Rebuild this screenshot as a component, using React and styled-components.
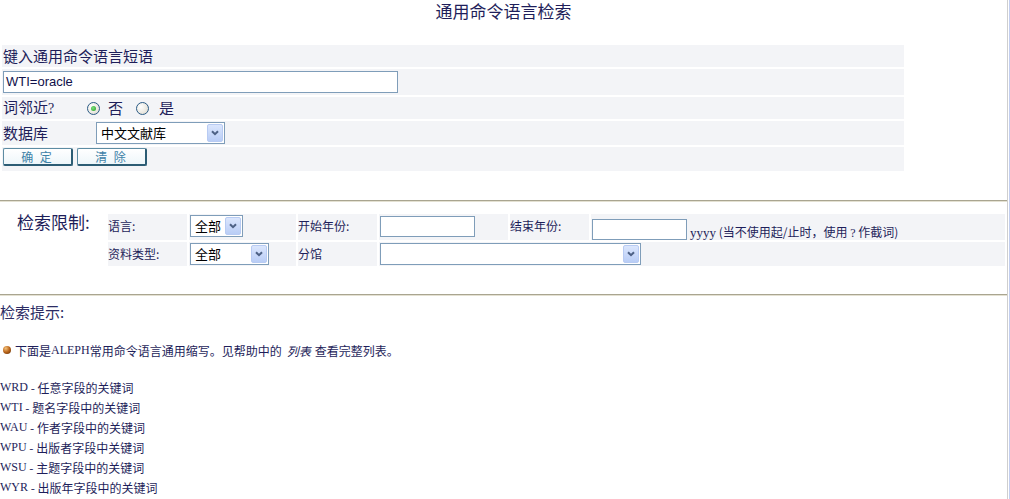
import React from 'react';
import styled, { createGlobalStyle } from 'styled-components';

const NAVY = '#1e1e5a';

const GlobalStyle = createGlobalStyle`
  html, body {
    margin: 0;
    padding: 0;
    background: #fff;
  }
  body {
    font-family: "Noto Sans CJK SC", "Liberation Sans", sans-serif;
    color: ${NAVY};
  }
`;

const Page = styled.div`
  display: flex;
  min-height: 499px;
`;

const Main = styled.div`
  width: 1007px;
  flex: none;
`;

const Edge = styled.div`
  width: 1px;
  flex: none;
  border-left: 1px solid #cfcfcf;
  border-right: 1px solid #c3cff0;
`;

const Title = styled.div`
  text-align: center;
  font-size: 17px;
  line-height: 22px;
  height: 23px;
`;

const FormTable = styled.div`
  width: 906px;
  box-sizing: border-box;
  margin-top: 20px;
  padding: 2px;
  display: flex;
  flex-direction: column;
  gap: 2px;
`;

const Row = styled.div`
  height: ${p => p.$h}px;
  background: #f3f4f7;
  display: flex;
  align-items: ${p => (p.$top ? 'flex-start' : 'center')};
  padding-left: 1px;
  padding-top: ${p => (p.$top ? 1 : 0)}px;
  box-sizing: border-box;
  font-size: 15px;
  line-height: 20px;
`;

const Label = styled.span`
  width: ${p => p.$w}px;
  flex: none;
`;

const Serif = styled.span`
  font-family: "Liberation Serif", serif;
  font-size: ${p => p.$size || 13}px;
  color: ${p => p.$c || NAVY};
`;

const TextInput = styled.div`
  width: ${p => p.$w}px;
  height: ${p => p.$h || 22}px;
  box-sizing: border-box;
  border: 1px solid #7f9db9;
  background: #fff;
  font-family: "Liberation Sans", sans-serif;
  font-size: 13px;
  color: #10104a;
  padding-left: 2px;
  display: flex;
  align-items: center;
  flex: none;
`;

const RadioDot = styled.span`
  width: 13px;
  height: 13px;
  box-sizing: border-box;
  border-radius: 50%;
  border: 1px solid #2a5a85;
  background: radial-gradient(circle at 35% 35%, #ffffff 0%, #eceae3 55%, #d6d3c6 100%);
  display: inline-flex;
  align-items: center;
  justify-content: center;
  margin-left: ${p => p.$ml}px;
  flex: none;
  &::after {
    content: '';
    width: 5px;
    height: 5px;
    border-radius: 50%;
    background: ${p => (p.$on ? 'radial-gradient(circle at 40% 40%, #7ee07e, #1f9a1f)' : 'transparent')};
  }
`;

const RadioText = styled.span`
  margin-left: ${p => p.$ml}px;
`;

const SelectBox = styled.div`
  width: ${p => p.$w}px;
  height: 22px;
  box-sizing: border-box;
  border: 1px solid #7f9db9;
  background: #fff;
  display: flex;
  align-items: center;
  padding: 0 1px 0 4px;
  font-size: 13px;
  color: #000;
  flex: none;
`;

const SelectText = styled.span`
  flex: 1;
  line-height: 18px;
`;

const ArrowBtn = styled.span`
  width: 16px;
  height: 18px;
  box-sizing: border-box;
  border: 1px solid #b8cbf3;
  border-radius: 2px;
  background: linear-gradient(#dbe6fd, #b9cdf6);
  display: flex;
  align-items: center;
  justify-content: center;
`;

const Chevron = () => (
  <svg width="8" height="6" viewBox="0 0 8 6">
    <path d="M1 1.2 L4 4.2 L7 1.2" fill="none" stroke="#4d6185" strokeWidth="2" />
  </svg>
);

const Select = ({ w, children }) => (
  <SelectBox $w={w}>
    <SelectText>{children}</SelectText>
    <ArrowBtn>
      <Chevron />
    </ArrowBtn>
  </SelectBox>
);

const ButtonBar = styled.div`
  display: flex;
  gap: 4px;
`;

const Btn = styled.button`
  width: 70px;
  height: 18px;
  padding: 0;
  box-sizing: border-box;
  border-top: 1px solid #5d8ca3;
  border-left: 1px solid #5d8ca3;
  border-right: 2px solid #2c5c74;
  border-bottom: 2px solid #2c5c74;
  border-radius: 2px;
  background: linear-gradient(#ffffff, #eef6fa);
  color: #3f82a8;
  font-family: "Noto Sans CJK SC", sans-serif;
  font-size: 12px;
  line-height: 14px;
  letter-spacing: 2px;
`;

const Rule = styled.div`
  width: 1007px;
  margin-top: ${p => p.$mt}px;
  border-top: 1px solid #a9a590;
  border-bottom: 1px solid #e4e1d2;
`;

const LimitSection = styled.div`
  display: flex;
  margin-top: 10px;
`;

const LimitTitle = styled.div`
  width: 106px;
  flex: none;
  box-sizing: border-box;
  padding-left: 17px;
  font-size: 17px;
  line-height: 22px;
  margin-top: -1px;
`;

const LimitGrid = styled.div`
  width: 901px;
  box-sizing: border-box;
  padding: 2px;
  display: grid;
  grid-template-columns: 79px 107px 79px 129px 79px 1fr;
  grid-template-rows: 26px 24px;
  gap: 2px;
`;

const Cell = styled.div`
  background: #f3f4f7;
  grid-column: ${p => p.$span || 'auto'};
  font-size: 12px;
  line-height: 16px;
  padding-top: ${p => (p.$pt === undefined ? 1 : p.$pt)}px;
  padding-left: ${p => p.$pl || 0}px;
  display: ${p => (p.$flex ? 'flex' : 'block')};
  align-items: flex-end;
`;

const Note = styled.span`
  font-size: 12px;
  line-height: 14px;
  margin-left: 3px;
  white-space: nowrap;
`;

const HintTitle = styled.div`
  margin-top: 6px;
  font-size: 15px;
  line-height: 20px;
  color: #2c2c64;
`;

const BulletLine = styled.div`
  margin-top: 18px;
  display: flex;
  align-items: center;
  font-size: 12px;
  height: 20px;
  padding-left: 3px;
`;

const Orb = styled.span`
  width: 8px;
  height: 8px;
  border-radius: 50%;
  background: radial-gradient(circle at 35% 30%, #f6c27a 0%, #b8641a 50%, #5a2a05 100%);
  margin-right: 4px;
  flex: none;
`;

const Italic = styled.i`
  margin: 0 4px 0 5px;
`;

const CodeList = styled.div`
  margin-top: 17px;
  display: flex;
  flex-direction: column;
`;

const CodeLine = styled.div`
  font-size: 12px;
  height: 20px;
  display: flex;
  align-items: center;
  white-space: pre;
`;

const codes = [
  ['WRD', '任意字段的关键词'],
  ['WTI', '题名字段中的关键词'],
  ['WAU', '作者字段中的关键词'],
  ['WPU', '出版者字段中关键词'],
  ['WSU', '主题字段中的关键词'],
  ['WYR', '出版年字段中的关键词'],
];

export default function App() {
  return (
    <Page>
      <GlobalStyle />
      <Main>
        <Title>通用命令语言检索</Title>
        <FormTable>
          <Row $h={22}>键入通用命令语言短语</Row>
          <Row $h={26}>
            <TextInput $w={395}>WTI=oracle</TextInput>
          </Row>
          <Row $h={22}>
            <Label $w={84}>
              词邻近<Serif $size={14}>?</Serif>
            </Label>
            <RadioDot $on $ml={0} />
            <RadioText $ml={8}>否</RadioText>
            <RadioDot $ml={13} />
            <RadioText $ml={10}>是</RadioText>
          </Row>
          <Row $h={24}>
            <Label $w={93}>数据库</Label>
            <Select w={129}>中文文献库</Select>
          </Row>
          <Row $h={24} $top>
            <ButtonBar>
              <Btn>确 定</Btn>
              <Btn>清 除</Btn>
            </ButtonBar>
          </Row>
        </FormTable>

        <Rule $mt={27} />

        <LimitSection>
          <LimitTitle>检索限制:</LimitTitle>
          <LimitGrid>
            <Cell $pt={4}>语言:</Cell>
            <Cell $pl={1}>
              <Select w={53}>全部</Select>
            </Cell>
            <Cell $pt={4}>开始年份:</Cell>
            <Cell $pl={1} $pt={2}>
              <TextInput $w={95} $h={21} />
            </Cell>
            <Cell $pt={4}>结束年份:</Cell>
            <Cell $pl={1} $pt={2} $flex>
              <TextInput $w={95} $h={21} />
              <Note>
                <Serif $size={13}>yyyy</Serif> (当不使用起/止时，使用  <Serif $size={12}>?</Serif> 作截词)
              </Note>
            </Cell>
            <Cell $pt={4}>资料类型:</Cell>
            <Cell $pl={1}>
              <Select w={79}>全部</Select>
            </Cell>
            <Cell $pt={4}>分馆</Cell>
            <Cell $pl={1} $span="4 / 7">
              <Select w={261} />
            </Cell>
          </LimitGrid>
        </LimitSection>

        <Rule $mt={26} />

        <HintTitle>检索提示:</HintTitle>
        <BulletLine>
          <Orb />
          下面是<Serif $size={12}>ALEPH</Serif>常用命令语言通用缩写。见帮助中的
          <Italic>列表</Italic>查看完整列表。
        </BulletLine>
        <CodeList>
          {codes.map(([code, desc]) => (
            <CodeLine key={code}>
              <Serif $size={12}>{code}</Serif> - {desc}
            </CodeLine>
          ))}
        </CodeList>
      </Main>
      <Edge />
    </Page>
  );
}
